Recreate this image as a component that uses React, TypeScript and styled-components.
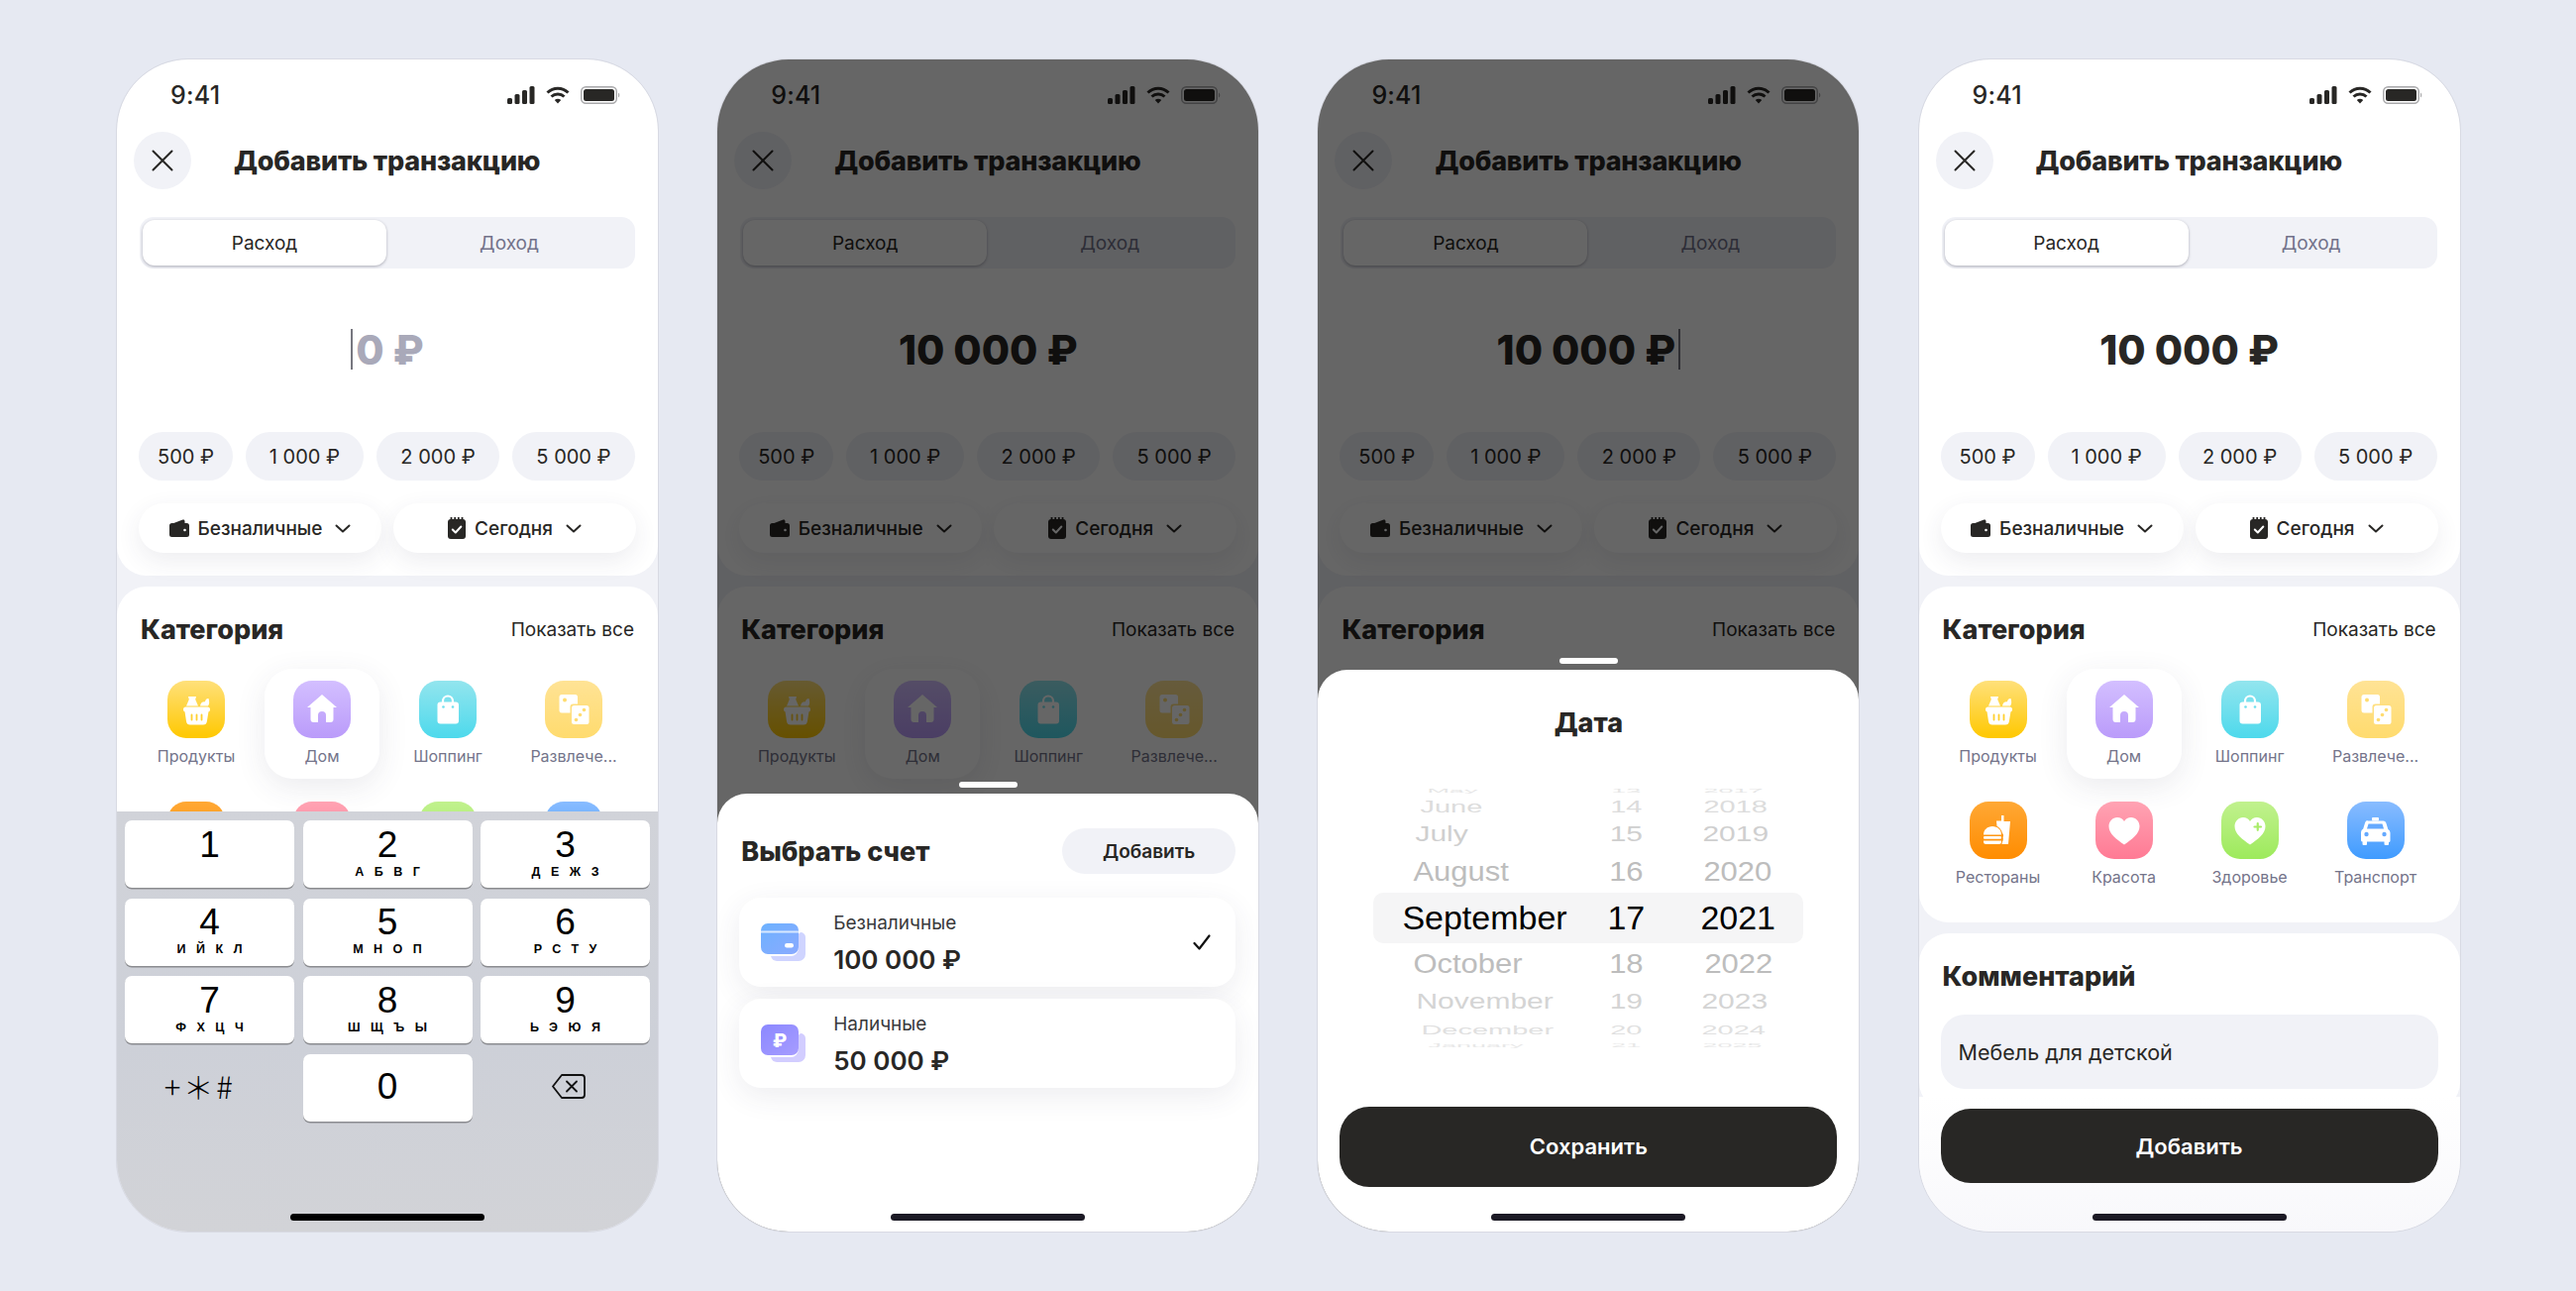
import React from 'react';
import styled, { createGlobalStyle } from 'styled-components';

const GlobalStyle = createGlobalStyle`
  html, body { margin: 0; padding: 0; background: #e6e9f2; }
  body { font-family: Inter, "Noto Sans", sans-serif; color: #282725; }
`;

const Page = styled.div`
  width: 2600px;
  height: 1303px;
  padding: 60px 118px;
  box-sizing: border-box;
  display: flex;
  gap: 60.2px;
  overflow: hidden;
`;

const Phone = styled.div`
  position: relative;
  flex: 0 0 546px;
  height: 1183px;
  border-radius: 72px;
  overflow: hidden;
  background: #f1f2f7;
  outline: 1.5px solid #d8dae3;
  outline-offset: -0.5px;
`;

const TopCard = styled.div`
  height: 521px;
  background: #fff;
  border-radius: 0 0 30px 30px;
  display: flex;
  flex-direction: column;
`;

const StatusBar = styled.div`
  height: 72px;
  padding: 0 38px 0 54px;
  flex: none;
  display: flex;
  align-items: center;
  justify-content: space-between;
`;

const Time = styled.span`
  font-size: 25px;
  font-weight: 500;
  letter-spacing: 0.2px;
`;

const StatusIcons = styled.div`
  display: flex;
  align-items: center;
  gap: 11px;
`;

const Header = styled.div`
  margin-top: 1px;
  padding-left: 17px;
  display: flex;
  align-items: center;
  gap: 43px;
`;

const CloseButton = styled.div`
  width: 58px;
  height: 58px;
  border-radius: 50%;
  background: #f1f2f7;
  display: flex;
  align-items: center;
  justify-content: center;
`;

const Title = styled.h1`
  margin: 0;
  font-size: 27px;
  font-weight: 800;
  letter-spacing: -0.2px;
`;

const Segmented = styled.div`
  margin: 28px 23px 0;
  height: 52px;
  box-sizing: border-box;
  padding: 3px;
  border-radius: 14px;
  background: #f1f2f7;
  display: grid;
  grid-template-columns: 246px 1fr;
`;

const Segment = styled.div<{ $active?: boolean }>`
  display: flex;
  align-items: center;
  justify-content: center;
  border-radius: 12px;
  font-size: 19px;
  background: ${(p) => (p.$active ? '#fff' : 'transparent')};
  color: ${(p) => (p.$active ? '#282725' : '#72728a')};
  box-shadow: ${(p) => (p.$active ? '0 1px 3px rgba(40, 40, 60, 0.35)' : 'none')};
`;

const AmountRow = styled.div`
  height: 165px;
  padding-bottom: 2px;
  box-sizing: border-box;
  display: flex;
  align-items: center;
  justify-content: center;
  gap: 3px;
`;

const Amount = styled.span<{ $empty?: boolean }>`
  font-size: 41px;
  font-weight: 800;
  color: ${(p) => (p.$empty ? '#a9a9b9' : '#282725')};
`;

const Caret = styled.span`
  width: 2px;
  height: 41px;
  background: #77777f;
`;

const Chips = styled.div`
  margin: 0 22px;
  display: grid;
  grid-template-columns: 95px 119px 124px 124px;
  gap: 13px;
`;

const Chip = styled.div`
  height: 49px;
  border-radius: 25px;
  background: #f1f2f7;
  display: flex;
  align-items: center;
  justify-content: center;
  font-size: 20px;
`;

const Dropdowns = styled.div`
  margin: 23px 22px 0;
  display: grid;
  grid-template-columns: 1fr 1fr;
  gap: 12px;
`;

const Dropdown = styled.div`
  height: 50px;
  border-radius: 25px;
  background: #fff;
  box-shadow: 0 8px 24px rgba(60, 60, 90, 0.09);
  display: flex;
  align-items: center;
  justify-content: center;
  gap: 9px;
  font-size: 19px;
  font-weight: 500;
`;

const Card = styled.section`
  margin-top: 11px;
  background: #fff;
  border-radius: 30px;
  padding: 28px 24px 23px;
`;

const CategoryCard = styled(Card)`
  min-height: 288px;
`;

const CardHead = styled.div`
  height: 30px;
  display: flex;
  align-items: center;
  justify-content: space-between;
`;

const CardTitle = styled.h2`
  margin: 0;
  font-size: 27px;
  font-weight: 800;
`;

const LinkText = styled.span`
  font-size: 19px;
`;

const CategoryGrid = styled.div`
  margin: 25px -7.5px 0;
  display: grid;
  grid-template-columns: repeat(4, 127px);
  row-gap: 11px;
  justify-items: center;
`;

const CategoryCell = styled.div<{ $selected?: boolean }>`
  width: 116px;
  height: 111px;
  box-sizing: border-box;
  padding-top: 12px;
  border-radius: 28px;
  display: flex;
  flex-direction: column;
  align-items: center;
  background: ${(p) => (p.$selected ? '#fff' : 'transparent')};
  box-shadow: ${(p) => (p.$selected ? '0 8px 30px rgba(60, 60, 90, 0.1)' : 'none')};
`;

const IconTile = styled.div<{ $from: string; $to: string }>`
  width: 58px;
  height: 58px;
  flex: none;
  border-radius: 19px;
  background: linear-gradient(${(p) => p.$from}, ${(p) => p.$to});
`;

const CategoryLabel = styled.span`
  margin-top: 9px;
  font-size: 16px;
  line-height: 18px;
  white-space: nowrap;
  color: #74748a;
`;

const CommentInput = styled.div`
  margin: 24px -2px 0;
  height: 75px;
  box-sizing: border-box;
  padding-left: 18px;
  border-radius: 24px;
  background: #f1f2f7;
  display: flex;
  align-items: center;
  font-size: 21.5px;
`;

const FooterBar = styled.div`
  position: absolute;
  left: 0;
  right: 0;
  bottom: 0;
  height: 136px;
  box-sizing: border-box;
  padding: 12px 22px 0;
  background: linear-gradient(#fff, #f8f8fb);
`;

const PrimaryButton = styled.div<{ $height: number }>`
  height: ${(p) => p.$height}px;
  border-radius: 30px;
  background: #282725;
  color: #fff;
  display: flex;
  align-items: center;
  justify-content: center;
  font-size: 22px;
  font-weight: 600;
`;

const HomeBar = styled.div<{ $color?: string }>`
  position: absolute;
  left: 175px;
  bottom: 11px;
  width: 196px;
  height: 7px;
  border-radius: 4px;
  background: ${(p) => p.$color || '#1c1a25'};
`;

const Keyboard = styled.div`
  position: absolute;
  left: 0;
  right: 0;
  bottom: 0;
  height: 424px;
  box-sizing: border-box;
  padding: 9px 8px 0;
  background: linear-gradient(#d1d3d9, #cdd0d8 55%, #d2d3d7);
  display: grid;
  grid-template-columns: repeat(3, 171px);
  grid-auto-rows: 68px;
  column-gap: 8.5px;
  row-gap: 10.7px;
`;

const Key = styled.div<{ $plain?: boolean }>`
  border-radius: 7px;
  background: ${(p) => (p.$plain ? 'transparent' : '#fff')};
  box-shadow: ${(p) => (p.$plain ? 'none' : '0 1.5px 0 #8b8c90')};
  display: flex;
  flex-direction: column;
  align-items: center;
  justify-content: center;
  font-family: "Liberation Sans", sans-serif;
  color: #000;
`;

const KeyDigit = styled.span<{ $low?: boolean }>`
  font-size: 37px;
  line-height: 36px;
  margin-top: ${(p) => (p.$low ? '-2px' : '-3px')};
`;

const KeyLetters = styled.span`
  font-size: 12.5px;
  line-height: 14px;
  margin-top: 2px;
  font-weight: 700;
  letter-spacing: 10.5px;
  margin-right: -10.5px;
  white-space: nowrap;
`;

const KeySymbols = styled.span`
  font-family: "Noto Sans CJK SC", "DejaVu Sans", sans-serif;
  font-size: 31px;
  font-weight: 300;
  letter-spacing: 2.5px;
  margin: -6px 0 0 -20px;
  white-space: nowrap;
`;

const DeleteSlot = styled.span`
  display: flex;
  margin-left: 7px;
  margin-top: -4px;
`;

const Dim = styled.div`
  position: absolute;
  inset: 0;
  background: rgba(0, 0, 0, 0.6);
`;

const Sheet = styled.div<{ $height: number }>`
  position: absolute;
  left: 0;
  right: 0;
  bottom: 0;
  height: ${(p) => p.$height}px;
  background: #fff;
  border-radius: 30px 30px 0 0;
`;

const SheetHandle = styled.div`
  position: absolute;
  top: -12px;
  left: 244px;
  width: 59px;
  height: 6px;
  border-radius: 3px;
  background: #fff;
`;

const AccountHead = styled.div`
  padding: 35px 23px 0 24px;
  display: flex;
  align-items: center;
  justify-content: space-between;
`;

const SmallButton = styled.div`
  width: 175px;
  height: 46px;
  border-radius: 23px;
  background: #f1f2f7;
  display: flex;
  align-items: center;
  justify-content: center;
  font-size: 19px;
  font-weight: 600;
`;

const AccountList = styled.div`
  margin: 24px 23px 0 22px;
  display: flex;
  flex-direction: column;
  gap: 12px;
`;

const AccountCard = styled.div`
  height: 90px;
  padding: 0 25px 0 22px;
  border-radius: 22px;
  background: #fff;
  box-shadow: 0 8px 30px rgba(60, 60, 90, 0.09);
  display: flex;
  align-items: center;
  gap: 28px;
`;

const AccountText = styled.div`
  flex: 1;
  display: flex;
  flex-direction: column;
  gap: 13px;
`;

const AccountName = styled.span`
  font-size: 19px;
  line-height: 22px;
  color: #3a3a3c;
`;

const AccountSum = styled.span`
  font-size: 26px;
  line-height: 26px;
  font-weight: 600;
`;

const SheetTitle = styled.h2`
  margin: 0;
  padding-top: 36px;
  height: 36px;
  line-height: 36px;
  text-align: center;
  font-size: 27px;
  font-weight: 800;
`;

const Wheel = styled.div`
  margin: 45px 56px 56.5px;
`;

const WheelRow = styled.div<{ $h: number; $active?: boolean; $color: string; $size: number }>`
  height: ${(p) => p.$h}px;
  line-height: ${(p) => p.$h}px;
  display: grid;
  grid-template-columns: 224px 62px 148px;
  overflow: hidden;
  font-family: "Liberation Sans", sans-serif;
  font-size: ${(p) => p.$size}px;
  color: ${(p) => p.$color};
  border-radius: ${(p) => (p.$active ? '10px' : '0')};
  background: ${(p) => (p.$active ? '#f5f5f6' : 'transparent')};
`;

const WheelCell = styled.span<{ $sy: number; $left?: number; $center?: boolean }>`
  display: block;
  white-space: nowrap;
  transform: scaleY(${(p) => p.$sy});
  padding-left: ${(p) => p.$left || 0}px;
  text-align: ${(p) => (p.$center ? 'center' : 'left')};
`;

const SaveWrap = styled.div`
  margin: 0 22px;
`;

/* status bar drawings */
const SignalIcon = () => (
  <svg width="28" height="18" viewBox="0 0 28 18" fill="#282725">
    <rect x="0" y="12" width="5" height="6" rx="1.5" />
    <rect x="7.5" y="8" width="5" height="10" rx="1.5" />
    <rect x="15" y="4" width="5" height="14" rx="1.5" />
    <rect x="22.5" y="0" width="5" height="18" rx="1.5" />
  </svg>
);

const WifiIcon = () => (
  <svg width="24" height="18" viewBox="0 0 24 18" fill="none" stroke="#282725" strokeWidth="3">
    <path d="M1.5 6.5a15 15 0 0 1 21 0" />
    <path d="M5.5 10.5a9.5 9.5 0 0 1 13 0" />
    <path d="M12 17.5l-3.2-3.4a4.6 4.6 0 0 1 6.4 0z" fill="#282725" stroke="none" />
  </svg>
);

const BatteryIcon = () => (
  <svg width="40" height="18" viewBox="0 0 40 18">
    <rect x="0.75" y="0.75" width="35.5" height="16.5" rx="4.5" fill="none" stroke="#a8a8aa" strokeWidth="1.5" />
    <rect x="3" y="3" width="31" height="12" rx="2.5" fill="#282725" />
    <path d="M38 6.5a3 3 0 0 1 0 5z" fill="#a8a8aa" />
  </svg>
);

const CloseIcon = () => (
  <svg width="22" height="22" viewBox="0 0 22 22" stroke="#282725" strokeWidth="2" strokeLinecap="round">
    <path d="M1.5 1.5l19 19M20.5 1.5l-19 19" />
  </svg>
);

const WalletIcon = () => (
  <svg width="20" height="18" viewBox="0 0 20 18" fill="#282725">
    <path d="M3 4.5L13.5 0.6c1-.4 2 .3 2 1.4V4.5z" />
    <path d="M2.5 4h15A2.5 2.5 0 0 1 20 6.5V15.5A2.5 2.5 0 0 1 17.5 18H2.5A2.5 2.5 0 0 1 0 15.5V6.5A2.5 2.5 0 0 1 2.5 4z" />
    <circle cx="15.5" cy="11" r="1.3" fill="#fff" />
  </svg>
);

const NoteIcon = () => (
  <svg width="18" height="22" viewBox="0 0 18 22">
    <path d="M3 2h12a3 3 0 0 1 3 3v14a3 3 0 0 1-3 3H3a3 3 0 0 1-3-3V5a3 3 0 0 1 3-3z" fill="#282725" />
    <path d="M3.5 0v4M7.2 0v4M10.8 0v4M14.5 0v4" stroke="#282725" strokeWidth="1.8" />
    <path d="M4.8 12.5l3 3 5.5-6" fill="none" stroke="#fff" strokeWidth="2" strokeLinecap="round" strokeLinejoin="round" />
  </svg>
);

const ChevronIcon = () => (
  <svg width="16" height="9" viewBox="0 0 16 9" fill="none" stroke="#282725" strokeWidth="2" strokeLinecap="round" strokeLinejoin="round" style={{ marginLeft: 4 }}>
    <path d="M1.5 1.5L8 7.5l6.5-6" />
  </svg>
);

const DeleteIcon = () => (
  <svg width="34" height="25" viewBox="0 0 34 25" fill="none" stroke="#111" strokeWidth="1.8" strokeLinejoin="round" strokeLinecap="round">
    <path d="M10 1h20a3 3 0 0 1 3 3v17a3 3 0 0 1-3 3H10L1 12.5z" />
    <path d="M15 7.5l10 10M25 7.5l-10 10" />
  </svg>
);

const CheckIcon = () => (
  <svg width="18" height="16" viewBox="0 0 18 16" fill="none" stroke="#111" strokeWidth="2.2" strokeLinecap="round" strokeLinejoin="round">
    <path d="M1.5 9l5 5.5L16.5 1.5" />
  </svg>
);

const CardAccountIcon = () => (
  <svg width="45" height="38" viewBox="0 0 45 38" style={{ flex: 'none' }}>
    <defs>
      <linearGradient id="acc-blue" x1="0" y1="0" x2="1" y2="1">
        <stop offset="0" stopColor="#6db2ff" />
        <stop offset="1" stopColor="#8aaaff" />
      </linearGradient>
    </defs>
    <path d="M40 9a5 5 0 0 1 5 5v17a7 7 0 0 1-7 7H17a7 7 0 0 1-7-5z" fill="#cfd4ff" />
    <rect x="0" y="0" width="38" height="33" rx="8" fill="#fff" />
    <rect x="0" y="0" width="38" height="31" rx="7" fill="url(#acc-blue)" />
    <rect x="0" y="7.5" width="38" height="2" fill="#d7e8ff" />
    <rect x="24" y="20" width="9" height="4.5" rx="2.2" fill="#fff" />
  </svg>
);

const CashAccountIcon = () => (
  <svg width="45" height="38" viewBox="0 0 45 38" style={{ flex: 'none' }}>
    <defs>
      <linearGradient id="acc-violet" x1="0" y1="0" x2="1" y2="1">
        <stop offset="0" stopColor="#8b88ff" />
        <stop offset="1" stopColor="#a69cff" />
      </linearGradient>
    </defs>
    <path d="M40 9a5 5 0 0 1 5 5v17a7 7 0 0 1-7 7H17a7 7 0 0 1-7-5z" fill="#d2cdff" />
    <rect x="0" y="0" width="38" height="33" rx="8" fill="#fff" />
    <rect x="0" y="0" width="38" height="31" rx="7" fill="url(#acc-violet)" />
    <text x="19" y="22.5" textAnchor="middle" fontFamily="Inter, sans-serif" fontSize="19" fontWeight="800" fill="#fff">₽</text>
  </svg>
);

/* category drawings, all on a 58 tile */
const Glyph = ({ children }: { children: React.ReactNode }) => (
  <svg width="58" height="58" viewBox="0 0 58 58" fill="#fff" style={{ display: 'block' }}>
    {children}
  </svg>
);

const categories = [
  {
    label: 'Продукты', from: '#ffe07a', to: '#ffc800',
    glyph: (
      <>
        <path d="M21 16h8l-.8 3 2.8 6.5H19l2.8-6.5z" />
        <path d="M33 25.5c.4-3 2.4-4.6 5-4.2.2-2 1.5-3.5 3.5-3.3 1 3 1 5.5-.5 7.5z" />
        <rect x="16" y="26.5" width="27" height="5" rx="2.5" />
        <path d="M17.5 31h24l-1.6 10a4 4 0 0 1-4 3.5H23a4 4 0 0 1-4-3.5z" />
        <path d="M24.5 34.5v5M29.5 34.5v5M34.5 34.5v5" stroke="#ffd030" strokeWidth="1.8" strokeLinecap="round" />
      </>
    ),
  },
  {
    label: 'Дом', selected: true, from: '#d3bfff', to: '#ba9bfa',
    glyph: <path d="M29 14L44 27h-3.5v12a3 3 0 0 1-3 3H33v-7a4 4 0 0 0-8 0v7h-4.5a3 3 0 0 1-3-3V27H14z" />,
  },
  {
    label: 'Шоппинг', from: '#93e5ee', to: '#4dd9ec',
    glyph: (
      <>
        <path d="M24 23v-2.5a5 5 0 0 1 10 0V23" fill="none" stroke="#fff" strokeWidth="2.2" />
        <rect x="18.5" y="21.5" width="21.5" height="22" rx="3" />
        <circle cx="24.5" cy="26.5" r="1.3" fill="#6fdfee" />
        <circle cx="34" cy="26.5" r="1.3" fill="#6fdfee" />
      </>
    ),
  },
  {
    label: 'Развлече...', from: '#ffe395', to: '#ffdb6e',
    glyph: (
      <>
        <rect x="14.5" y="14" width="18.5" height="18.5" rx="2.5" />
        <circle cx="20" cy="19.5" r="2" fill="#ffdc70" />
        <rect x="25.5" y="23.5" width="19.5" height="21" rx="3" fill="#ffdf80" />
        <rect x="27" y="25" width="17.5" height="19" rx="2.5" />
        <circle cx="39.5" cy="29.5" r="1.8" fill="#ffdc70" />
        <circle cx="35.5" cy="34.5" r="1.8" fill="#ffdc70" />
        <circle cx="31.5" cy="39.5" r="1.8" fill="#ffdc70" />
      </>
    ),
  },
  {
    label: 'Рестораны', from: '#ffa835', to: '#ff8c00',
    glyph: (
      <>
        <path d="M32 14h2.5v6H41l-2 23h-6.5l.5-2.5c1-1.5 1-3 .5-4.5 1-1.5.5-3-.5-4-.5-3-3-6-5.5-7.2l-.5-5.3H32z" />
        <path d="M14 33.5c0-5 4-8.5 9-8.5s9 3.5 9 8.5z" />
        <rect x="14" y="35" width="18" height="2.8" rx="1" />
        <path d="M14 39.5h18v1a2.5 2.5 0 0 1-2.5 2.5h-13A2.5 2.5 0 0 1 14 40.5z" />
      </>
    ),
  },
  {
    label: 'Красота', from: '#ffa3b3', to: '#ff7a94',
    glyph: <path d="M29 43.5C21 38 13.5 32.5 13.5 25c0-5 3.8-9 8.5-9 3 0 5.5 1.5 7 4 1.5-2.5 4-4 7-4 4.7 0 8.5 4 8.5 9 0 7.5-7.5 13-15.5 18.5z" />,
  },
  {
    label: 'Здоровье', from: '#c1f18e', to: '#9dea5c',
    glyph: (
      <>
        <path d="M29 43.5C21 38 13.5 32.5 13.5 25c0-5 3.8-9 8.5-9 3 0 5.5 1.5 7 4 1.5-2.5 4-4 7-4 4.7 0 8.5 4 8.5 9 0 7.5-7.5 13-15.5 18.5z" />
        <path d="M33.5 25.5h6.5M36.75 22.2v6.6" stroke="#a8ec68" strokeWidth="2.2" strokeLinecap="round" />
      </>
    ),
  },
  {
    label: 'Транспорт', from: '#89bcff', to: '#3f9bff',
    glyph: (
      <>
        <rect x="25" y="16" width="7" height="3.5" rx="1" />
        <path d="M20.5 19.5h16a3 3 0 0 1 2.8 2l2 6.5a4 4 0 0 1 2.2 3.5v8a1.5 1.5 0 0 1-1.5 1.5V43a1 1 0 0 1-1 1h-2.5a1 1 0 0 1-1-1v-2.5H20V43a1 1 0 0 1-1 1h-2.5a1 1 0 0 1-1-1v-2.5a1.5 1.5 0 0 1-1.5-1.5v-8a4 4 0 0 1 2.2-3.5l2-6.5a3 3 0 0 1 2.8-2z" />
        <path d="M21.5 22.5h14l1.5 5H20z" fill="#64a9ff" />
        <circle cx="19.5" cy="33" r="2.2" fill="#64a9ff" />
        <circle cx="37.5" cy="33" r="2.2" fill="#64a9ff" />
      </>
    ),
  },
];

const keys = [
  ['1', ''], ['2', 'АБВГ'], ['3', 'ДЕЖЗ'],
  ['4', 'ИЙКЛ'], ['5', 'МНОП'], ['6', 'РСТУ'],
  ['7', 'ФХЦЧ'], ['8', 'ШЩЪЫ'], ['9', 'ЬЭЮЯ'],
];

const wheelRows = [
  { h: 10, sy: 0.18, color: '#e6e6e6', size: 27, month: 'May', day: '13', year: '2017', ml: 54, yl: 47 },
  { h: 22, sy: 0.55, color: '#dcdcdc', size: 29, month: 'June', day: '14', year: '2018', ml: 47, yl: 47 },
  { h: 34, sy: 0.72, color: '#cfcfcf', size: 30, month: 'July', day: '15', year: '2019', ml: 42, yl: 46 },
  { h: 42, sy: 0.92, color: '#bdbdbd', size: 31, month: 'August', day: '16', year: '2020', ml: 40, yl: 47 },
  { h: 51, sy: 1, color: '#000', size: 34, month: 'September', day: '17', year: '2021', ml: 29, yl: 44, active: true },
  { h: 42, sy: 0.92, color: '#bdbdbd', size: 31, month: 'October', day: '18', year: '2022', ml: 40, yl: 48 },
  { h: 34, sy: 0.74, color: '#d4d4d4', size: 30, month: 'November', day: '19', year: '2023', ml: 43, yl: 45 },
  { h: 22, sy: 0.46, color: '#e0e0e0', size: 29, month: 'December', day: '20', year: '2024', ml: 48, yl: 45 },
  { h: 10, sy: 0.18, color: '#e8e8e8', size: 27, month: 'January', day: '21', year: '2025', ml: 55, yl: 46 },
];

const amounts = ['500 ₽', '1 000 ₽', '2 000 ₽', '5 000 ₽'];

type FormProps = {
  amount: string;
  empty?: boolean;
  caret?: 'start' | 'end';
  tiles?: number;
  labels?: number;
  comment?: boolean;
};

// tiles / labels: how much of the grid is not covered by a sheet or the keypad
const Form = ({ amount, empty, caret, tiles = 8, labels = 8, comment }: FormProps) => (
  <>
    <TopCard>
      <StatusBar>
        <Time>9:41</Time>
        <StatusIcons>
          <SignalIcon />
          <WifiIcon />
          <BatteryIcon />
        </StatusIcons>
      </StatusBar>
      <Header>
        <CloseButton>
          <CloseIcon />
        </CloseButton>
        <Title>Добавить транзакцию</Title>
      </Header>
      <Segmented>
        <Segment $active>Расход</Segment>
        <Segment>Доход</Segment>
      </Segmented>
      <AmountRow>
        {caret === 'start' && <Caret />}
        <Amount $empty={empty}>{amount}</Amount>
        {caret === 'end' && <Caret />}
      </AmountRow>
      <Chips>
        {amounts.map((a) => (
          <Chip key={a}>{a}</Chip>
        ))}
      </Chips>
      <Dropdowns>
        <Dropdown>
          <WalletIcon />
          Безналичные
          <ChevronIcon />
        </Dropdown>
        <Dropdown>
          <NoteIcon />
          Сегодня
          <ChevronIcon />
        </Dropdown>
      </Dropdowns>
    </TopCard>
    <CategoryCard>
      <CardHead>
        <CardTitle>Категория</CardTitle>
        <LinkText>Показать все</LinkText>
      </CardHead>
      <CategoryGrid>
        {categories.slice(0, tiles).map((c, i) => (
          <CategoryCell key={c.label} $selected={c.selected}>
            <IconTile $from={c.from} $to={c.to}>
              <Glyph>{c.glyph}</Glyph>
            </IconTile>
            {i < labels && <CategoryLabel>{c.label}</CategoryLabel>}
          </CategoryCell>
        ))}
      </CategoryGrid>
    </CategoryCard>
    {comment && (
      <Card>
        <CardHead>
          <CardTitle>Комментарий</CardTitle>
        </CardHead>
        <CommentInput>Мебель для детской</CommentInput>
      </Card>
    )}
  </>
);

const NumberPad = () => (
  <Keyboard>
    {keys.map(([digit, letters]) => (
      <Key key={digit}>
        <KeyDigit>{digit}</KeyDigit>
        <KeyLetters>{letters || '\u00a0'}</KeyLetters>
      </Key>
    ))}
    <Key $plain>
      <KeySymbols>+＊#</KeySymbols>
    </Key>
    <Key>
      <KeyDigit $low>0</KeyDigit>
    </Key>
    <Key $plain>
      <DeleteSlot>
        <DeleteIcon />
      </DeleteSlot>
    </Key>
    <HomeBar $color="#000" />
  </Keyboard>
);

const AccountSheet = () => (
  <Sheet $height={442}>
    <SheetHandle />
    <AccountHead>
      <CardTitle>Выбрать счет</CardTitle>
      <SmallButton>Добавить</SmallButton>
    </AccountHead>
    <AccountList>
      <AccountCard>
        <CardAccountIcon />
        <AccountText>
          <AccountName>Безналичные</AccountName>
          <AccountSum>100 000 ₽</AccountSum>
        </AccountText>
        <CheckIcon />
      </AccountCard>
      <AccountCard>
        <CashAccountIcon />
        <AccountText>
          <AccountName>Наличные</AccountName>
          <AccountSum>50 000 ₽</AccountSum>
        </AccountText>
      </AccountCard>
    </AccountList>
    <HomeBar />
  </Sheet>
);

const DateSheet = () => (
  <Sheet $height={567}>
    <SheetHandle />
    <SheetTitle>Дата</SheetTitle>
    <Wheel>
      {wheelRows.map((r) => (
        <WheelRow key={r.month} $h={r.h} $active={r.active} $color={r.color} $size={r.size}>
          <WheelCell $sy={r.sy} $left={r.ml}>{r.month}</WheelCell>
          <WheelCell $sy={r.sy} $center>{r.day}</WheelCell>
          <WheelCell $sy={r.sy} $left={r.yl}>{r.year}</WheelCell>
        </WheelRow>
      ))}
    </Wheel>
    <SaveWrap>
      <PrimaryButton $height={81}>Сохранить</PrimaryButton>
    </SaveWrap>
    <HomeBar />
  </Sheet>
);

export default function App() {
  return (
    <Page>
      <GlobalStyle />
      <Phone>
        <Form amount="0 ₽" empty caret="start" labels={4} />
        <NumberPad />
      </Phone>
      <Phone>
        <Form amount="10 000 ₽" tiles={4} />
        <Dim />
        <AccountSheet />
      </Phone>
      <Phone>
        <Form amount="10 000 ₽" caret="end" tiles={0} />
        <Dim />
        <DateSheet />
      </Phone>
      <Phone>
        <Form amount="10 000 ₽" comment />
        <FooterBar>
          <PrimaryButton $height={75}>Добавить</PrimaryButton>
        </FooterBar>
        <HomeBar />
      </Phone>
    </Page>
  );
}
